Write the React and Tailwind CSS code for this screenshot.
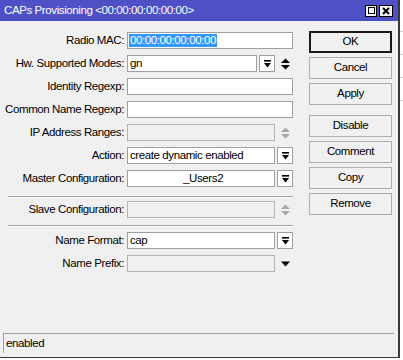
import React from "react";

const FONT = { fontFamily: '"Liberation Sans", Arial, sans-serif' };

function DropBtn() {
  return (
    <div className="h-[17px] w-[16px] border border-[#a0a0a0] bg-white flex items-center justify-center">
      <svg width="7" height="8" viewBox="0 0 7 8">
        <rect x="0" y="0" width="7" height="1.6" fill="#000" />
        <polygon points="0,3 7,3 3.5,7.5" fill="#000" />
      </svg>
    </div>
  );
}

function UpDown({ gray }) {
  const c = gray ? "#a8a8a8" : "#000";
  return (
    <div className="w-[16px] flex items-center justify-center">
      <svg width="9" height="12" viewBox="0 0 9 12">
        <polygon points="0,5 9,5 4.5,0.5" fill={c} />
        <polygon points="0,7 9,7 4.5,11.5" fill={c} />
      </svg>
    </div>
  );
}

function Down() {
  return (
    <div className="w-[16px] flex items-center justify-center">
      <svg width="9" height="6" viewBox="0 0 9 6">
        <polygon points="0,0.5 9,0.5 4.5,5.5" fill="#000" />
      </svg>
    </div>
  );
}

function Field({ value, disabled, selected, className = "" }) {
  return (
    <div
      className={`h-[17px] border flex items-center px-[1px] overflow-hidden ${
        disabled ? "bg-[#f0f0f0] border-[#b4b4b4]" : "bg-white border-[#a0a0a0]"
      } ${className}`}
    >
      {value && (
        <span className={`px-[1px] leading-[13px] ${selected ? "bg-[#3399ff] text-white" : "text-black"}`}>{value}</span>
      )}
    </div>
  );
}

function Row({ label, children }) {
  return (
    <div className="flex items-center h-[23px]">
      <div className="w-[124px] text-right text-black whitespace-nowrap">{label}</div>
      <div className="ml-[3px] flex items-center gap-[2px]">{children}</div>
    </div>
  );
}

function Sep({ className = "" }) {
  return <div className={`ml-[8px] w-[285px] h-[2px] border-t border-[#a0a0a0] border-b border-b-white ${className}`} />;
}

function Btn({ children, primary, className = "" }) {
  return (
    <div
      className={`h-[22px] w-[83px] flex items-center justify-center bg-[#f0f0f0] text-black ${
        primary ? "border-2 border-[#1a1a1a]" : "border border-[#adadad]"
      } ${className}`}
    >
      {children}
    </div>
  );
}

export default function App() {
  return (
    <div className="w-[403px] h-[360px] flex bg-white overflow-hidden text-[11.5px] tracking-[-0.4px]" style={FONT}>
      <div className="w-[400px] h-[358px] flex flex-col bg-[#f0f0f0] border-r-2 border-b border-[#3a3a3a]">
        <div className="h-[21px] bg-[#4d51c5] flex items-center pl-[4px] pr-[5px]">
          <div className="flex-1 text-white">CAPs Provisioning &lt;00:00:00:00:00:00&gt;</div>
          <div className="flex gap-[2px]">
            <div className="w-[12px] h-[12px] bg-[#f4f4f4] border border-black flex items-center justify-center">
              <div className="w-[7px] h-[7px] border border-black" />
            </div>
            <div className="w-[14px] h-[12px] bg-[#f4f4f4] border border-black flex items-center justify-center">
              <svg width="8" height="8" viewBox="0 0 8 8">
                <path d="M1 1 L7 7 M7 1 L1 7" stroke="#000" strokeWidth="2" />
              </svg>
            </div>
          </div>
        </div>

        <div className="flex flex-1">
          <div className="w-[300px] pt-[8px]">
            <Row label="Radio MAC:">
              <Field value="00:00:00:00:00:00" selected className="w-[166px]" />
            </Row>
            <Row label="Hw. Supported Modes:">
              <Field value="gn" className="w-[130px]" />
              <DropBtn />
              <UpDown />
            </Row>
            <Row label="Identity Regexp:">
              <Field className="w-[166px]" />
            </Row>
            <Row label="Common Name Regexp:">
              <Field className="w-[166px]" />
            </Row>
            <Row label="IP Address Ranges:">
              <Field disabled className="w-[148px]" />
              <UpDown gray />
            </Row>
            <Row label="Action:">
              <Field value="create dynamic enabled" className="w-[148px]" />
              <DropBtn />
            </Row>
            <Row label="Master Configuration:">
              <Field value="                   _Users2" className="w-[148px] whitespace-pre" />
              <DropBtn />
            </Row>
            <Sep className="mt-[6px]" />
            <Row label="Slave Configuration:">
              <Field disabled className="w-[148px]" />
              <UpDown gray />
            </Row>
            <Sep className="mt-[4px] mb-[2px]" />
            <Row label="Name Format:">
              <Field value="cap" className="w-[148px]" />
              <DropBtn />
            </Row>
            <Row label="Name Prefix:">
              <Field disabled className="w-[148px]" />
              <Down />
            </Row>
          </div>

          <div className="ml-[9px] pt-[10px] flex flex-col gap-[4px]">
            <Btn primary>OK</Btn>
            <Btn>Cancel</Btn>
            <Btn>Apply</Btn>
            <Btn className="mt-[6px]">Disable</Btn>
            <Btn>Comment</Btn>
            <Btn>Copy</Btn>
            <Btn>Remove</Btn>
          </div>
        </div>

        <div className="mx-[3px] mb-[4px] mr-[4px] h-[20px] border-t border-l border-[#a0a0a0] flex items-center pl-[2px] text-black">
          enabled
        </div>
      </div>
      <div className="flex-1 bg-white flex flex-col pt-[31px] gap-[22px]">
        <div className="h-px bg-[#d0d0d0]" />
        <div className="h-px bg-[#d0d0d0]" />
        <div className="h-px bg-[#d0d0d0]" />
        <div className="h-px bg-[#d0d0d0]" />
      </div>
    </div>
  );
}
